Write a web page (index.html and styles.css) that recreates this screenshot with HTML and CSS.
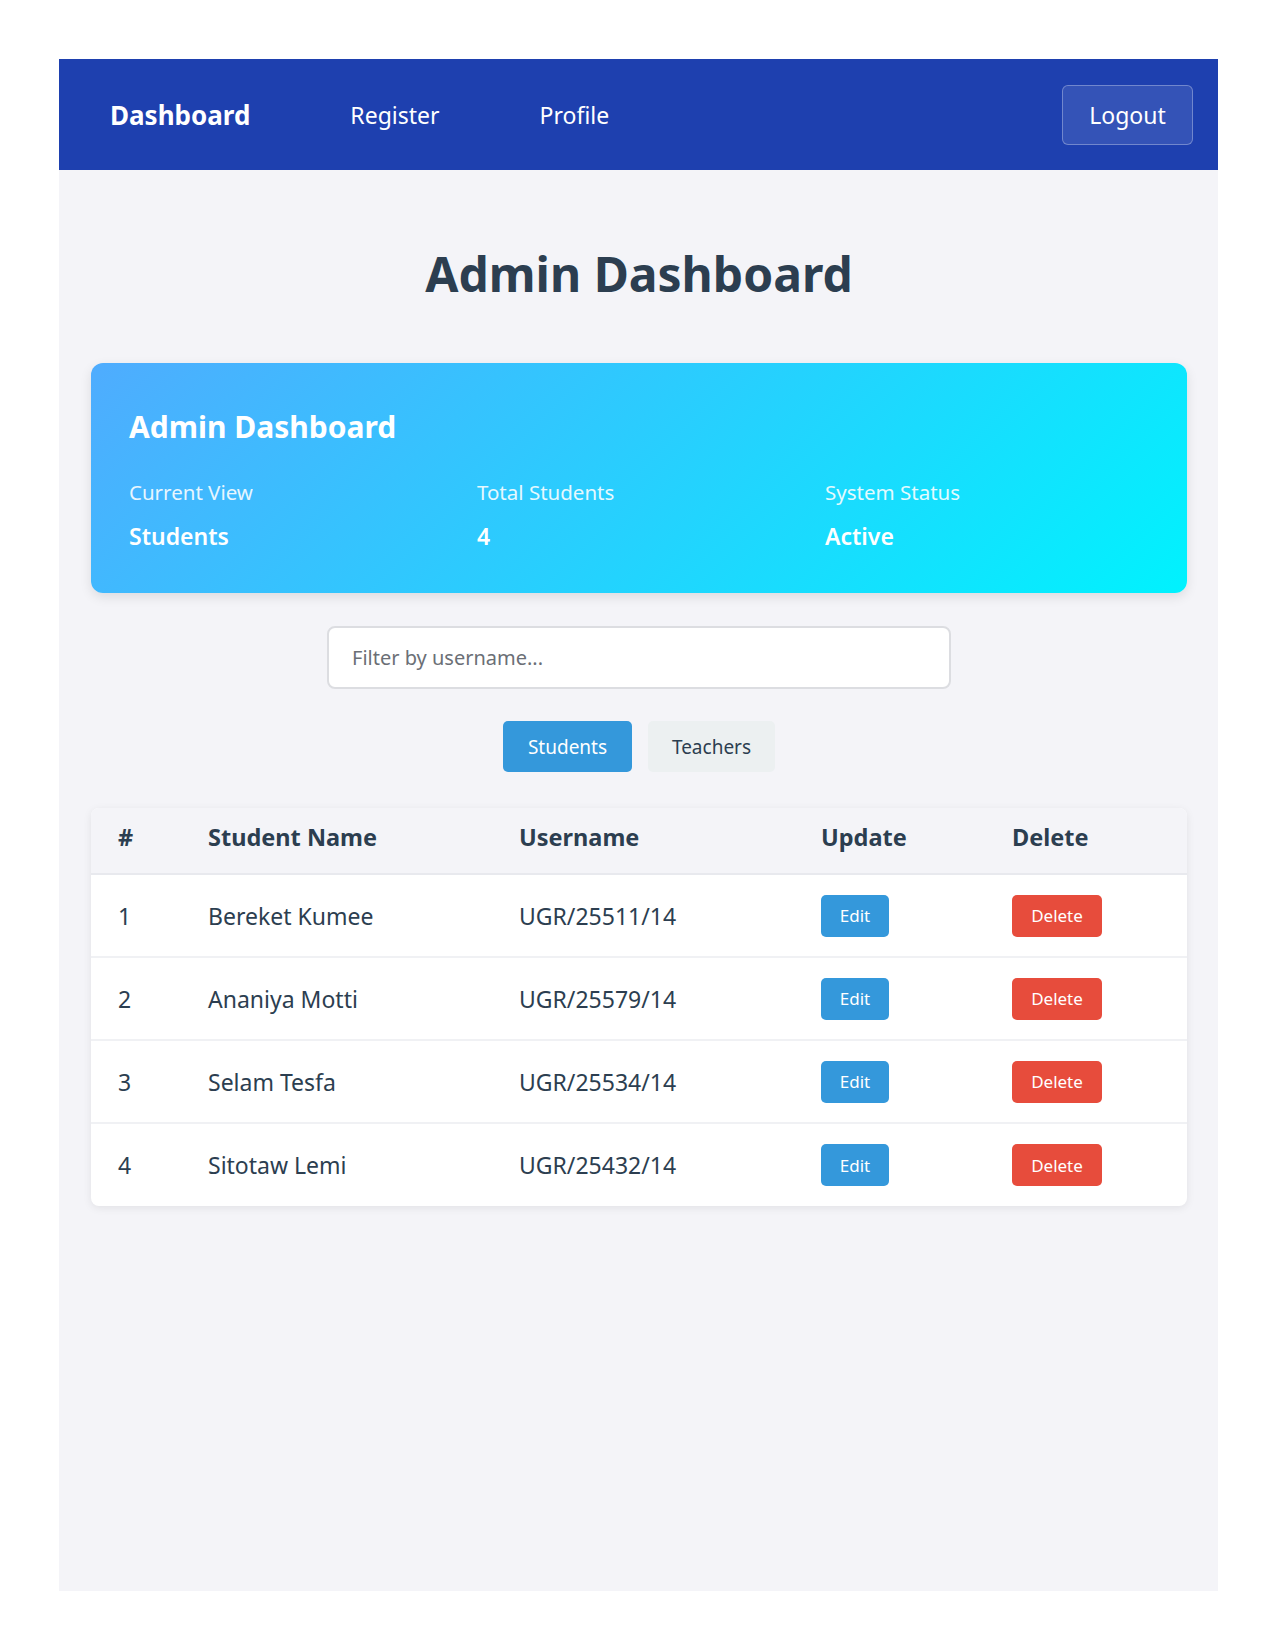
FILE: index.html
```html
<!DOCTYPE html>
<html lang="en">
<head>
<meta charset="utf-8">
<title>Admin Dashboard</title>
<link rel="stylesheet" href="styles.css">
</head>
<body>
<div class="app">
  <nav class="navbar">
    <div class="nav-links">
      <a class="nav-link active" href="#">Dashboard</a>
      <a class="nav-link" href="#">Register</a>
      <a class="nav-link" href="#">Profile</a>
    </div>
    <button class="logout">Logout</button>
  </nav>
  <main class="content">
    <h1 class="page-title">Admin Dashboard</h1>
    <section class="hero">
      <h2 class="hero-title">Admin Dashboard</h2>
      <div class="hero-stats">
        <div class="stat">
          <div class="stat-label">Current View</div>
          <div class="stat-value">Students</div>
        </div>
        <div class="stat">
          <div class="stat-label">Total Students</div>
          <div class="stat-value">4</div>
        </div>
        <div class="stat">
          <div class="stat-label">System Status</div>
          <div class="stat-value">Active</div>
        </div>
      </div>
    </section>
    <div class="filter-row">
      <input class="filter" type="text" placeholder="Filter by username...">
    </div>
    <div class="tabs">
      <button class="tab tab-active">Students</button>
      <button class="tab">Teachers</button>
    </div>
    <div class="table-wrap">
      <table class="data-table">
        <colgroup>
          <col class="c-num"><col class="c-name"><col class="c-user"><col class="c-upd"><col class="c-del">
        </colgroup>
        <thead>
          <tr><th>#</th><th>Student Name</th><th>Username</th><th>Update</th><th>Delete</th></tr>
        </thead>
        <tbody>
          <tr><td>1</td><td>Bereket Kumee</td><td>UGR/25511/14</td><td><button class="btn btn-edit">Edit</button></td><td><button class="btn btn-del">Delete</button></td></tr>
          <tr><td>2</td><td>Ananiya Motti</td><td>UGR/25579/14</td><td><button class="btn btn-edit">Edit</button></td><td><button class="btn btn-del">Delete</button></td></tr>
          <tr><td>3</td><td>Selam Tesfa</td><td>UGR/25534/14</td><td><button class="btn btn-edit">Edit</button></td><td><button class="btn btn-del">Delete</button></td></tr>
          <tr><td>4</td><td>Sitotaw Lemi</td><td>UGR/25432/14</td><td><button class="btn btn-edit">Edit</button></td><td><button class="btn btn-del">Delete</button></td></tr>
        </tbody>
      </table>
    </div>
  </main>
</div>
</body>
</html>
```
FILE: styles.css
```css
* { box-sizing: border-box; }
body {
  margin: 8px;
  background: #ffffff;
  font-family: "Noto Sans", "Open Sans", sans-serif;
  color: #2c3e50;
}
.app {
  margin: 51px 49px 0 51px;
  min-height: 1532px;
  background: #f4f4f8;
  display: flex;
  flex-direction: column;
}
.navbar {
  background: #1e40af;
  height: 111px;
  display: flex;
  align-items: center;
  justify-content: space-between;
  padding: 0 25px 0 51px;
}
.nav-links {
  display: flex;
  gap: 100px;
  align-items: center;
}
.nav-link {
  color: #ffffff;
  text-decoration: none;
  font-size: 23px;
}
.nav-link.active { font-weight: 700; font-size: 26px; }
.logout {
  width: 131px;
  height: 60px;
  background: rgba(255,255,255,0.1);
  border: 1px solid rgba(255,255,255,0.3);
  border-radius: 6px;
  color: #ffffff;
  font-family: inherit;
  font-size: 23px;
}
.content {
  padding: 0 31px 0 32px;
}
.page-title {
  margin: 72px 0 0;
  text-align: center;
  font-size: 48px;
  font-weight: 700;
  line-height: 64px;
  color: #2c3e50;
}
.hero {
  margin-top: 57px;
  height: 230px;
  border-radius: 12px;
  padding: 44px 38px 0;
  background: linear-gradient(135deg, #4facfe 0%, #00f2fe 100%);
  color: #ffffff;
  box-shadow: 0 4px 12px rgba(0,0,0,0.1);
}
.hero-title {
  margin: 0;
  font-size: 30px;
  line-height: 40px;
  font-weight: 700;
}
.hero-stats {
  margin-top: 32px;
  display: grid;
  grid-template-columns: repeat(3, 1fr);
  gap: 24px;
}
.stat-label {
  font-size: 20.5px;
  line-height: 26px;
  opacity: 0.88;
}
.stat-value {
  margin-top: 16px;
  font-size: 23px;
  line-height: 30px;
  font-weight: 600;
}
.filter-row {
  display: flex;
  justify-content: center;
  margin-top: 33px;
}
.filter {
  width: 624px;
  height: 63px;
  border: 2px solid #dcdde1;
  border-radius: 8px;
  padding: 0 23px;
  font-family: inherit;
  font-size: 20px;
  color: #2c3e50;
  background: #ffffff;
}
.filter::placeholder { color: #6b6f76; }
.tabs {
  display: flex;
  justify-content: center;
  gap: 16px;
  margin-top: 32px;
}
.tab {
  height: 51px;
  width: 129px;
  border: none;
  border-radius: 5px;
  background: #ecf0f1;
  color: #2c3e50;
  font-family: inherit;
  font-size: 19px;
}
.tab + .tab { width: 127px; }
.tab-active {
  background: #3498db;
  color: #ffffff;
}
.table-wrap {
  margin-top: 36px;
  background: #ffffff;
  border-radius: 8px;
  box-shadow: 0 2px 8px rgba(0,0,0,0.08);
  overflow: hidden;
}
.data-table {
  width: 100%;
  border-collapse: collapse;
  table-layout: fixed;
}
.c-num { width: 90px; }
.c-name { width: 311px; }
.c-user { width: 302px; }
.c-upd { width: 191px; }
.data-table th {
  background: #f4f4f8;
  text-align: left;
  font-size: 23.5px;
  font-weight: 700;
  height: 66px;
  padding: 0 0 8px 27px;
  border-bottom: 2px solid #e8e9ee;
  color: #2c3e50;
}
.data-table td {
  height: 83px;
  font-size: 23px;
  padding: 0 0 0 27px;
  border-bottom: 2px solid #f0f1f4;
  color: #2c3e50;
}
.data-table tbody tr:last-child td { border-bottom: none; }
.btn {
  height: 42px;
  border: none;
  border-radius: 5px;
  color: #ffffff;
  font-family: inherit;
  font-size: 17px;
}
.btn-edit { width: 68px; background: #3498db; }
.btn-del { width: 90px; background: #e74c3c; }
```
